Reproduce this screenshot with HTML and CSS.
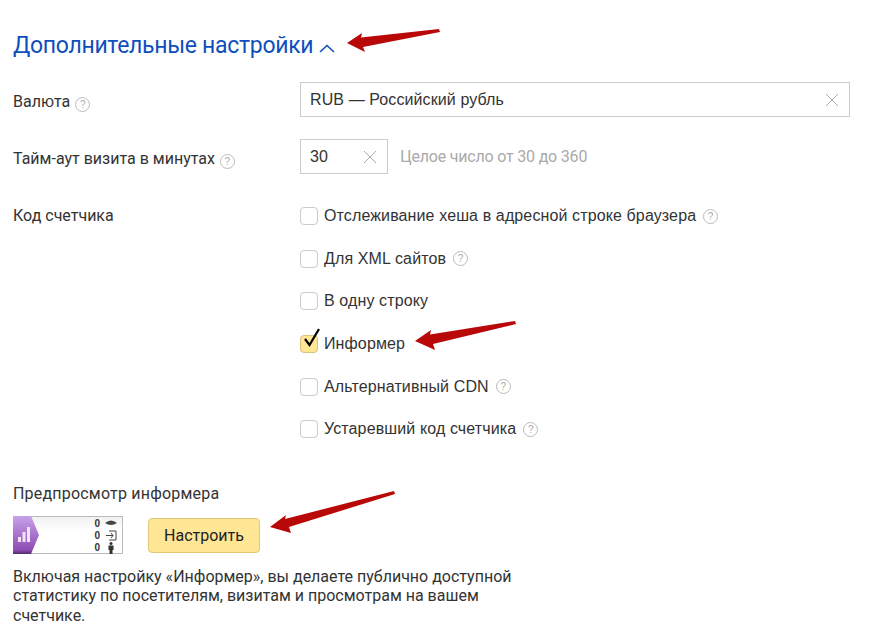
FILE: index.html
```html
<!DOCTYPE html>
<html lang="ru">
<head>
    <meta charset="UTF-8">
    <title>Дополнительные настройки</title>
    <link rel="stylesheet" href="styles.css">
</head>
<body>
<div class="page">
    <h2 class="title">Дополнительные настройки
        <svg class="title_icon" width="18" height="10" viewBox="0 0 18 10"><path d="M2 9L9 2.5L16 9" fill="none" stroke="#0f4fbd" stroke-width="1.6"/></svg>
    </h2>

    <div class="row row_currency">
        <div class="label">Валюта <span class="hint">?</span></div>
        <div class="field field_wide">
            <span>RUB — Российский рубль</span>
            <svg class="clear" width="14" height="14" viewBox="0 0 14 14"><path d="M1 1L13 13M13 1L1 13" stroke="#aaa" stroke-width="1"/></svg>
        </div>
    </div>

    <div class="row row_timeout">
        <div class="label">Тайм-аут визита в минутах <span class="hint">?</span></div>
        <div class="field field_small">
            <span>30</span>
            <svg class="clear" width="14" height="14" viewBox="0 0 14 14"><path d="M1 1L13 13M13 1L1 13" stroke="#aaa" stroke-width="1"/></svg>
        </div>
        <div class="note">Целое число от 30 до 360</div>
    </div>

    <div class="row row_code">
        <div class="label">Код счетчика</div>
        <ul class="checks">
            <li><i class="box"></i>Отслеживание хеша в адресной строке браузера <span class="hint">?</span></li>
            <li><i class="box"></i>Для XML сайтов <span class="hint">?</span></li>
            <li><i class="box"></i>В одну строку</li>
            <li><i class="box box_on"></i>Информер
                <svg class="tick" width="20" height="22" viewBox="0 0 20 22"><path d="M4 11L8.5 17L18 1" fill="none" stroke="#000" stroke-width="2.2"/></svg>
            </li>
            <li><i class="box"></i>Альтернативный CDN <span class="hint">?</span></li>
            <li><i class="box"></i>Устаревший код счетчика <span class="hint">?</span></li>
        </ul>
    </div>

    <div class="preview_title">Предпросмотр информера</div>
    <div class="preview">
        <div class="informer">
            <svg class="informer_badge" width="27" height="38" viewBox="0 0 27 38">
                <defs>
                    <linearGradient id="badge" x1="0" y1="0" x2="0" y2="1">
                        <stop offset="0" stop-color="#c7a2ea"/>
                        <stop offset="0.9" stop-color="#8e4cb4"/>
                        <stop offset="1" stop-color="#4d2a63"/>
                    </linearGradient>
                </defs>
                <path d="M0 0H18L26 19L18 38H0Z" fill="url(#badge)"/>
                <path d="M5 26V21H8V26ZM9.5 26V16H12.500V26ZM14 26V11H17V26Z" fill="#f0e4f8"/>
            </svg>
            <div class="informer_stats">
                <div>0
                    <svg width="12" height="9" viewBox="0 0 12 9"><path d="M0 4Q6 -1 12 4Q6 8 0 4Z" fill="#444"/></svg>
                </div>
                <div>0
                    <svg width="12" height="11" viewBox="0 0 12 11"><path d="M4 1H11V10H4M1 5.500H8M6 3L8 5.500L6 8" fill="none" stroke="#444"/></svg>
                </div>
                <div>0
                    <svg width="12" height="12" viewBox="0 0 12 12"><circle cx="6" cy="1.500" r="1.500" fill="#333"/><path d="M3.500 3.500H8.500V8H7.500V12H4.500V8H3.500Z" fill="#333"/></svg>
                </div>
            </div>
        </div>
        <button class="btn">Настроить</button>
    </div>
    <p class="about">Включая настройку «Информер», вы делаете публично доступной статистику по посетителям, визитам и просмотрам на вашем счетчике.</p>

    <svg class="arrows" width="872" height="634" viewBox="0 0 872 634">
        <path d="M347 43L362 33L361 37.500L439 29L440 32L363 47L365 52Z" fill="#b80808"/>
        <path d="M415 341L431 330L430 334.500L515 321L516 324L433 344L435 350Z" fill="#b80808"/>
        <path d="M270 527L286 515L285 519L394 491L395 494L289 527L291 533Z" fill="#b80808"/>
    </svg>
</div>
</body>
</html>
```

FILE: styles.css
```css
*{
    margin: 0;
    padding: 0;
    list-style: none;
    box-sizing: border-box;
}
body{
    font-family: Roboto, "Liberation Sans", sans-serif;
    font-size: 16px;
    color: #333;
    background: #fff;
}
.page{
    position: relative;
    width: 872px;
    height: 634px;
    padding: 31px 22px 0 13px;
    overflow: hidden;
}
.title{
    font-size: 23px;
    font-weight: 400;
    line-height: 30px;
    letter-spacing: -0.3px;
    color: #0f4fbd;
}
.title_icon{
    margin-left: -1px;
}
.row{
    display: flex;
    align-items: flex-start;
}
.row_currency{
    margin-top: 21px;
}
.row_timeout{
    margin-top: 22px;
}
.row_code{
    margin-top: 32px;
}
.label{
    width: 287px;
    flex: none;
    line-height: 20px;
    padding-top: 10px;
}
.row_code .label{
    padding-top: 0;
}
.hint{
    display: inline-block;
    width: 15px;
    height: 15px;
    margin-left: 1px;
    border: 1px solid #bbb;
    border-radius: 50%;
    font-family: "Liberation Sans", sans-serif;
    font-size: 10px;
    line-height: 13px;
    text-align: center;
    color: #aaa;
    vertical-align: -1px;
}
.field{
    display: flex;
    align-items: center;
    justify-content: space-between;
    height: 35px;
    border: 1px solid #ccc;
    padding: 0 10px 0 9px;
    font-family: "Liberation Sans", sans-serif;
    letter-spacing: 0.1px;
}
.field_wide{
    flex: 1;
}
.field_small{
    width: 88px;
}
.clear{
    flex: none;
    margin-left: auto;
}
.note{
    margin-left: 12px;
    line-height: 35px;
    letter-spacing: -0.2px;
    color: #aaa;
}
.checks{
    margin-top: -11px;
    font-family: "Liberation Sans", sans-serif;
    letter-spacing: 0.12px;
}
.checks li{
    position: relative;
    display: flex;
    align-items: center;
    gap: 6px;
    height: 42.6px;
}
.box{
    flex: none;
    width: 18px;
    height: 18px;
    border: 1px solid #ccc;
    border-radius: 4px;
    background: #fff;
}
.box_on{
    background: #ffe695;
    border-color: #d9c37a;
}
.tick{
    position: absolute;
    left: 1px;
    top: 5px;
}
.preview_title{
    margin-top: 33px;
    line-height: 20px;
    letter-spacing: 0.2px;
}
.preview{
    display: flex;
    align-items: flex-start;
    gap: 25px;
    margin-top: 12px;
}
.informer{
    display: flex;
    justify-content: space-between;
    width: 110px;
    height: 38px;
    border: 1px solid #bbb;
    border-left: 0;
    background: linear-gradient(#f1f1f1, #fff 40%);
}
.informer_badge{
    flex: none;
    margin-top: -1px;
}
.informer_stats{
    padding-right: 5px;
    padding-top: 1px;
    font-family: "Liberation Sans", sans-serif;
    font-size: 10px;
    font-weight: 700;
    line-height: 12px;
}
.informer_stats div{
    display: flex;
    align-items: center;
    justify-content: flex-end;
    gap: 5px;
    height: 12px;
}
.btn{
    width: 112px;
    height: 35px;
    margin-top: 2px;
    border: 1px solid #e0c878;
    border-radius: 4px;
    background: #ffe695;
    font-family: inherit;
    font-size: 16px;
    color: #222;
}
.about{
    width: 505px;
    margin-top: 13px;
    line-height: 19.5px;
}
.arrows{
    position: absolute;
    left: 0;
    top: 0;
    pointer-events: none;
}
```
